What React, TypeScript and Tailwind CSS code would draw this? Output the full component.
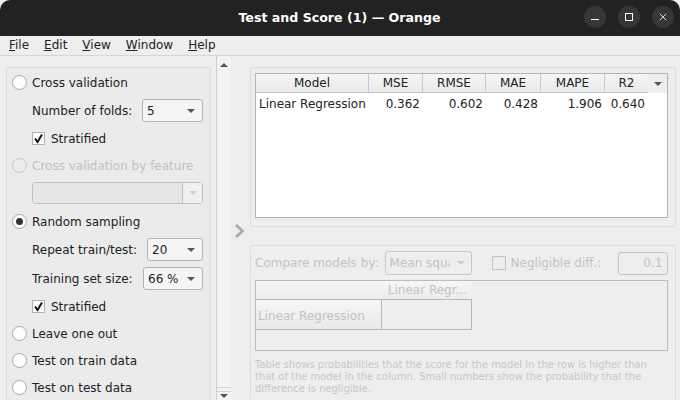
import { X } from 'lucide-react'

const FONT = 'font-["DejaVu_Sans",sans-serif]'

function Caret({ muted = false }: { muted?: boolean }) {
  return (
    <span
      className={`w-0 h-0 border-x-[4px] border-x-transparent border-t-[4px] ${muted ? 'border-t-[#cfcfcf]' : 'border-t-[#555]'}`}
    />
  )
}

function Radio({ label, checked = false, disabled = false }: { label: string; checked?: boolean; disabled?: boolean }) {
  return (
    <div className={`h-[27px] flex items-center gap-[5px] pl-[5px] whitespace-nowrap ${disabled ? 'text-[#c0c0c0]' : 'text-[#222]'}`}>
      <span
        className={`w-[15px] h-[15px] rounded-full border flex items-center justify-center ${
          disabled ? 'border-[#c4c4c4] bg-[#ececec]' : 'border-[#a8a8a8] bg-white'
        }`}
      >
        {checked && <span className="w-[7px] h-[7px] rounded-full bg-[#333]" />}
      </span>
      <span>{label}</span>
    </div>
  )
}

function Combo({ label, value, width }: { label: string; value: string; width: string }) {
  return (
    <div className="h-[29px] flex items-center justify-between pl-[25px] pr-[1px] text-[#222] whitespace-nowrap">
      <span>{label}</span>
      <div className={`${width} h-[23px] bg-[#f5f5f5] border border-[#b4b4b4] rounded-[3px] flex items-center justify-between pl-[4px] pr-[7px]`}>
        <span>{value}</span>
        <Caret />
      </div>
    </div>
  )
}

function Stratified() {
  return (
    <div className="h-[27px] flex items-center gap-[6px] pl-[25px] text-[#222]">
      <span className="w-[13px] h-[13px] bg-white border border-[#b0b0b0] flex items-center justify-center">
        <svg width="11" height="11" viewBox="0 0 11 11" fill="none" stroke="#111" strokeWidth="2">
          <path d="M2 5.5 L4.5 9 L9 1.5" />
        </svg>
      </span>
      <span>Stratified</span>
    </div>
  )
}

const COLUMNS = [
  { name: 'Model', width: 'w-[113px]' },
  { name: 'MSE', width: 'w-[54px]' },
  { name: 'RMSE', width: 'w-[63px]' },
  { name: 'MAE', width: 'w-[55px]' },
  { name: 'MAPE', width: 'w-[64px]' },
]

function WinButton({ children }: { children: React.ReactNode }) {
  return <div className="w-[22px] h-[22px] rounded-full bg-[#363636] flex items-center justify-center">{children}</div>
}

export default function App() {
  return (
    <div className={`${FONT} w-[680px] h-[400px] overflow-hidden bg-[#eeeeee] text-[12px] flex flex-col`}>
      <div className="h-[36px] shrink-0 bg-[#222222] rounded-t-[10px] flex items-center relative">
        <div className="flex-1 text-center text-white font-bold text-[12.6px] pr-[1px]">Test and Score (1) — Orange</div>
        <div className="absolute right-[6px] top-[6px] flex gap-[12px]">
          <WinButton>
            <span className="w-[8px] h-[1.5px] bg-white mt-[5px]" />
          </WinButton>
          <WinButton>
            <span className="w-[8px] h-[8px] border border-white" />
          </WinButton>
          <WinButton>
            <X size={12} color="white" strokeWidth={1.6} />
          </WinButton>
        </div>
      </div>

      <div className="h-[20px] shrink-0 bg-[#eeeeee] border-b border-[#d6d6d6] flex items-center pl-[9px] gap-[15px] text-[#222] pb-[1px]">
        <span><u>F</u>ile</span>
        <span><u>E</u>dit</span>
        <span><u>V</u>iew</span>
        <span><u>W</u>indow</span>
        <span><u>H</u>elp</span>
      </div>

      <div className="flex-1 min-h-0 flex">
        <div className="w-[216px] shrink-0 pl-[6px] pt-[11px]">
          <div className="w-[205px] border border-[#dcdcdc] rounded-[2px] bg-[#ebebeb] pt-[1px] pr-[6px]">
            <Radio label="Cross validation" />
            <Combo label="Number of folds:" value="5" width="w-[61px]" />
            <Stratified />
            <Radio label="Cross validation by feature" disabled />
            <div className="h-[22px] ml-[25px] mr-[1px] mt-[3px] mb-[4px] border border-[#c0c0c0] rounded-[3px] flex">
              <div className="flex-1 bg-[#e6e6e6] border-r border-[#c0c0c0]" />
              <div className="w-[19px] bg-[#f0f0f0] flex items-center justify-center">
                <Caret muted />
              </div>
            </div>
            <Radio label="Random sampling" checked />
            <Combo label="Repeat train/test:" value="20" width="w-[56px]" />
            <Combo label="Training set size:" value="66 %" width="w-[60px]" />
            <Stratified />
            <Radio label="Leave one out" />
            <Radio label="Test on train data" />
            <Radio label="Test on test data" />
          </div>
        </div>

        <div className="w-[15px] shrink-0 border-l border-[#cfcfcf] bg-[#f3f3f3] flex flex-col items-center justify-between">
          <span className="mt-[7px] w-0 h-0 border-x-[4px] border-x-transparent border-b-[4px] border-b-[#555]" />
          <div className="w-full">
            <div className="h-[5px] border-y border-[#d4d4d4]" />
            <div className="h-[8px] flex items-center justify-center">
              <Caret />
            </div>
          </div>
        </div>

        <div className="w-[19px] shrink-0 flex items-center justify-center pt-[6px] pl-[1px] pr-[4px]">
          <svg width="11" height="14" viewBox="0 0 11 14" fill="none" stroke="#a8a8a8" strokeWidth="2.6">
            <path d="M2 1 L8.5 7 L2 13" />
          </svg>
        </div>

        <div className="w-[426px] shrink-0 pt-[11px]">
          <div className="h-[160px] border border-[#dcdcdc] rounded-[2px] bg-[#ededed] px-[4px] pt-[5px]">
            <div className="h-[145px] w-[413px] border border-[#b4b4b4] bg-white flex flex-col">
              <div className="h-[19px] flex">
                {COLUMNS.map((c) => (
                  <div
                    key={c.name}
                    className={`${c.width} text-center text-[#222] leading-[18px] border-r border-b border-[#c8c8c8] bg-gradient-to-b from-[#f6f6f6] to-[#e9e9e9]`}
                  >
                    {c.name}
                  </div>
                ))}
                <div className="w-[43px] text-center text-[#222] leading-[18px] border-b border-[#c8c8c8] bg-gradient-to-b from-[#f6f6f6] to-[#e9e9e9]">
                  R2
                </div>
                <div className="flex-1 flex items-center justify-center bg-[#eeeeee]">
                  <Caret />
                </div>
              </div>
              <div className="h-[22px] flex items-center text-[#222]">
                <div className="w-[113px] pl-[3px] whitespace-nowrap">Linear Regression</div>
                <div className="w-[54px] pr-[3px] text-right">0.362</div>
                <div className="w-[63px] pr-[3px] text-right">0.602</div>
                <div className="w-[55px] text-right pr-[3px]">0.428</div>
                <div className="w-[64px] pr-[3px] text-right">1.906</div>
                <div className="w-[43px] pr-[3px] text-right">0.640</div>
              </div>
            </div>
          </div>

          <div className="mt-[18px] h-[200px] border border-[#dcdcdc] rounded-[2px] bg-[#eeeeee] px-[4px] text-[#c2c2c2]">
            <div className="h-[34px] flex items-center whitespace-nowrap">
              <span>Compare models by:</span>
              <div className="ml-[6px] w-[87px] h-[24px] border border-[#c8c8c8] rounded-[3px] flex items-center pl-[4px] pr-[6px] justify-between overflow-hidden">
                <span className="w-[60px] overflow-hidden whitespace-nowrap">Mean squared</span>
                <Caret muted />
              </div>
              <span className="ml-[20px] w-[14px] h-[14px] border border-[#c4c4c4]" />
              <span className="ml-[5px]">Negligible diff.:</span>
              <div className="ml-[17px] w-[50px] h-[23px] border border-[#c4c4c4] rounded-[3px] flex items-center justify-end pr-[5px]">0.1</div>
            </div>
            <div className="h-[71px] w-[413px] border border-[#bcbcbc]">
              <div className="h-[19px] w-[216px] flex justify-end items-center pr-[5px] border-b border-[#b8b8b8] bg-gradient-to-b from-[#f6f6f6] to-[#ececec]">
                <span>Linear Regr...</span>
              </div>
              <div className="h-[30px] w-[216px] flex border-b border-[#b8b8b8] border-r">
                <div className="w-[126px] pl-[2px] pt-[2px] flex items-center border-r border-[#b8b8b8] bg-gradient-to-b from-[#f6f6f6] to-[#e9e9e9] whitespace-nowrap">
                  Linear Regression
                </div>
              </div>
            </div>
            <p className="mt-[8px] text-[9.95px] leading-[12px] text-[#c6c6c6] whitespace-nowrap">
              Table shows probabilities that the score for the model in the row is higher than
              <br />
              that of the model in the column. Small numbers show the probability that the
              <br />
              difference is negligible.
            </p>
          </div>
        </div>
      </div>
    </div>
  )
}
